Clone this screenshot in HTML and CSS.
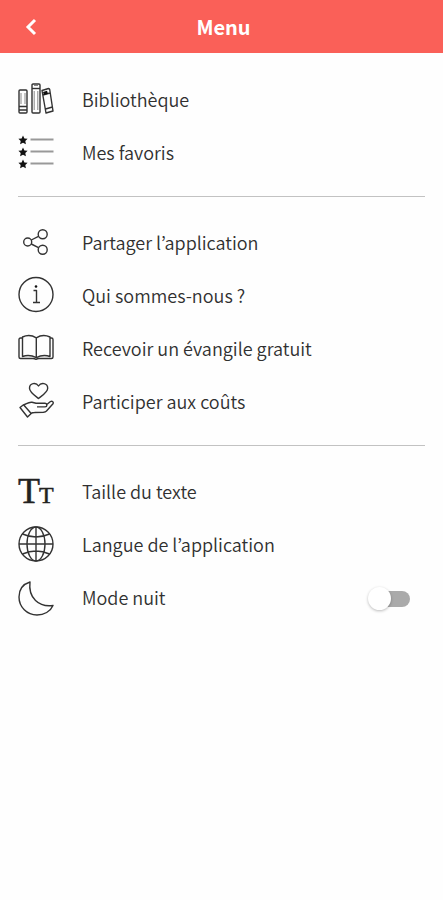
FILE: index.html
```html
<!DOCTYPE html>
<html lang="fr">
<head>
<meta charset="utf-8">
<meta name="viewport" content="width=device-width, initial-scale=1">
<title>Menu</title>
<link rel="stylesheet" href="styles.css">
</head>
<body>
<header class="bar">
  <button class="back" type="button" aria-label="Retour">
    <svg width="12" height="18" viewBox="0 0 12 18"><path d="M10 2 3 9l7 7"/></svg>
  </button>
  <h1 class="title">Menu</h1>
</header>
<main class="menu">
  <nav class="group">
    <a class="row" href="#bibliotheque">
      <svg class="icon" viewBox="0 0 36 37" aria-hidden="true">
        <rect x="1" y="8" width="8" height="23" rx="1"/><path d="M1 24.500h8M1 28h8"/><path d="M3 11v11M7 11v11" class="fine"/>
        <rect x="14" y="2" width="8" height="29" rx="1"/><path d="M14 6.500h8"/><path d="M16.200 9v19M19.800 9v19M16 3.500h4" class="fine"/>
        <path d="m24 8.500 6.500-2q1 0 1.200 1L35 29l-7 2zM25 13l7-2M27.500 27l7-2"/><path d="m25 10 4-1.300 1 3-4 1.300z" class="solid"/>
      </svg>
      <span class="label">Bibliothèque</span>
    </a>
    <a class="row" href="#favoris">
      <svg class="icon" viewBox="0 0 36 37" aria-hidden="true">
        <defs><path id="star" d="m0-4.500 1.400 2.900 3.200.4-2.300 2.200.6 3.200L0 2.700l-2.900 1.500.6-3.200-2.300-2.200 3.200-.4z"/></defs>
        <use href="#star" x="5" y="5" class="solid"/><use href="#star" x="5" y="17" class="solid"/><use href="#star" x="5" y="29" class="solid"/>
        <path d="M12.500 4.500h23M12.500 16.500h23M12.500 28.500h23" class="list-lines"/>
      </svg>
      <span class="label">Mes favoris</span>
    </a>
  </nav>
  <nav class="group">
    <a class="row" href="#partager">
      <svg class="icon" viewBox="0 0 36 37" aria-hidden="true">
        <circle cx="9.700" cy="17" r="4"/><circle cx="24.700" cy="9.300" r="4.500"/><circle cx="24.700" cy="24.700" r="4.500"/><path d="m13.300 15 7.200-3.700M13.300 19l7.200 3.600"/>
      </svg>
      <span class="label">Partager l’application</span>
    </a>
    <a class="row" href="#qui">
      <svg class="icon" viewBox="0 0 36 37" aria-hidden="true">
        <circle cx="18" cy="16.500" r="17"/><circle cx="18" cy="8.500" r="1.300" class="solid"/><path d="M15.500 12.500H18.500V24.500M15 24.500h7"/>
      </svg>
      <span class="label">Qui sommes-nous ?</span>
    </a>
    <a class="row" href="#evangile">
      <svg class="icon" viewBox="0 0 36 37" aria-hidden="true">
        <path d="M4.500 7H2.500Q1 7 1 8.500V26q0 1.500 1.500 1.500H15q1.500 0 3 .8 1.500-.8 3-.8h12.500q1.500 0 1.500-1.500V8.500Q35 7 33.500 7H32"/>
        <path d="M4.500 25.500V6q7-3.500 13.800.8Q25 2.500 32 6v19.500q-7-2.500-13.700 1.200-6.800-3.700-13.800-1.200zM18.300 6.800v20"/>
      </svg>
      <span class="label">Recevoir un évangile gratuit</span>
    </a>
    <a class="row" href="#couts">
      <svg class="icon" viewBox="0 0 36 37" aria-hidden="true">
        <path d="M20.500 14.500C16 11 11.500 8 11.500 4.200 11.500-1 18-2 20.500 2 23-2 29.700-1 29.700 4.200c0 3.800-4.700 6.800-9.200 10.300z"/>
        <path d="m2 23.500 3.500-2.800 7.700 8.800L9.500 33z"/>
        <path d="M5.800 21C9 19.500 11 17.800 14 18.300l4 1h9c2.500.3 2.500 3.500 0 3.600h-8M28.500 20.800l4-3.300c1.800-1 3.500.8 2.500 2.300L28.500 27q-1 1-3 1.200l-9 .3q-2 0-3.500.8"/>
      </svg>
      <span class="label">Participer aux coûts</span>
    </a>
  </nav>
  <div class="group">
    <a class="row" href="#taille">
      <svg class="icon" viewBox="0 0 36 37" aria-hidden="true">
        <text x="0" y="29" class="big-t">T</text><text x="21" y="29" class="small-t">T</text>
      </svg>
      <span class="label">Taille du texte</span>
    </a>
    <a class="row" href="#langue">
      <svg class="icon" viewBox="0 0 36 37" aria-hidden="true">
        <circle cx="18" cy="17" r="17"/><ellipse cx="18" cy="17" rx="9" ry="17"/><path d="M18 0v34M1 17h34M4.500 7q13.500 6 27 0M4.500 27q13.500-6 27 0"/>
      </svg>
      <span class="label">Langue de l’application</span>
    </a>
    <label class="row">
      <svg class="icon" viewBox="0 0 36 37" aria-hidden="true">
        <path d="M12 2C4 4.500 1 11 1 17c0 10 8 18 18 18 7 0 13.500-3.500 16-9.500C21 27.500 10 18 12 2z"/>
      </svg>
      <span class="label">Mode nuit</span>
      <input class="switch" type="checkbox" role="switch">
    </label>
  </div>
</main>
</body>
</html>
```
FILE: styles.css
```css
* {
  box-sizing: border-box;
}

body {
  margin: 0;
  background: #fefefe;
  color: #303030;
  font-family: "Noto Sans CJK JP", "Noto Sans", sans-serif;
  font-size: 18px;
  font-weight: 350;
  line-height: 24px;
}

.bar {
  display: grid;
  grid-template-columns: 48px 1fr 44px;
  align-items: center;
  height: 53px;
  padding: 0 8px;
  background: #fa6058;
  color: #fff;
}

.back {
  display: flex;
  align-items: center;
  height: 48px;
  padding: 0 17px;
  border: 0;
  background: none;
}

.back svg {
  flex: none;
  fill: none;
  stroke: #fff;
  stroke-width: 3;
}

.title {
  margin: 0;
  font-size: 20px;
  font-weight: 700;
  text-align: center;
}

.menu {
  padding: 1px 18px;
}

.group {
  padding: 20px 0 16px;
}

.group + .group {
  border-top: 1px solid #c2c2c2;
}

.row {
  display: flex;
  align-items: center;
  gap: 28px;
  height: 53px;
  color: inherit;
  text-decoration: none;
}

.label {
  padding-bottom: 4px;
}

.icon {
  flex: none;
  width: 36px;
  height: 37px;
  overflow: visible;
  fill: none;
  stroke: #333;
  stroke-width: 1.4;
  stroke-linejoin: round;
}

.icon .fine {
  stroke: #888;
  stroke-width: 1;
}

.icon .solid {
  fill: #111;
  stroke: none;
}

.icon .list-lines {
  stroke: #999;
  stroke-width: 2;
}

.icon text {
  fill: #222;
  stroke: #222;
  stroke-width: 0.5;
  font-family: "Liberation Serif", serif;
}

.big-t {
  font-size: 36px;
}

.small-t {
  font-size: 24px;
}

.switch {
  appearance: none;
  display: flex;
  align-items: center;
  width: 38px;
  height: 16px;
  margin: 0 15px 0 auto;
  border-radius: 8px;
  background: #aaa;
}

.switch::before {
  content: "";
  flex: none;
  width: 23px;
  height: 23px;
  margin: 0 -4px;
  border-radius: 50%;
  background: #fff;
  box-shadow: 0 1px 3px #0004;
}

.switch:checked {
  justify-content: flex-end;
}
```
